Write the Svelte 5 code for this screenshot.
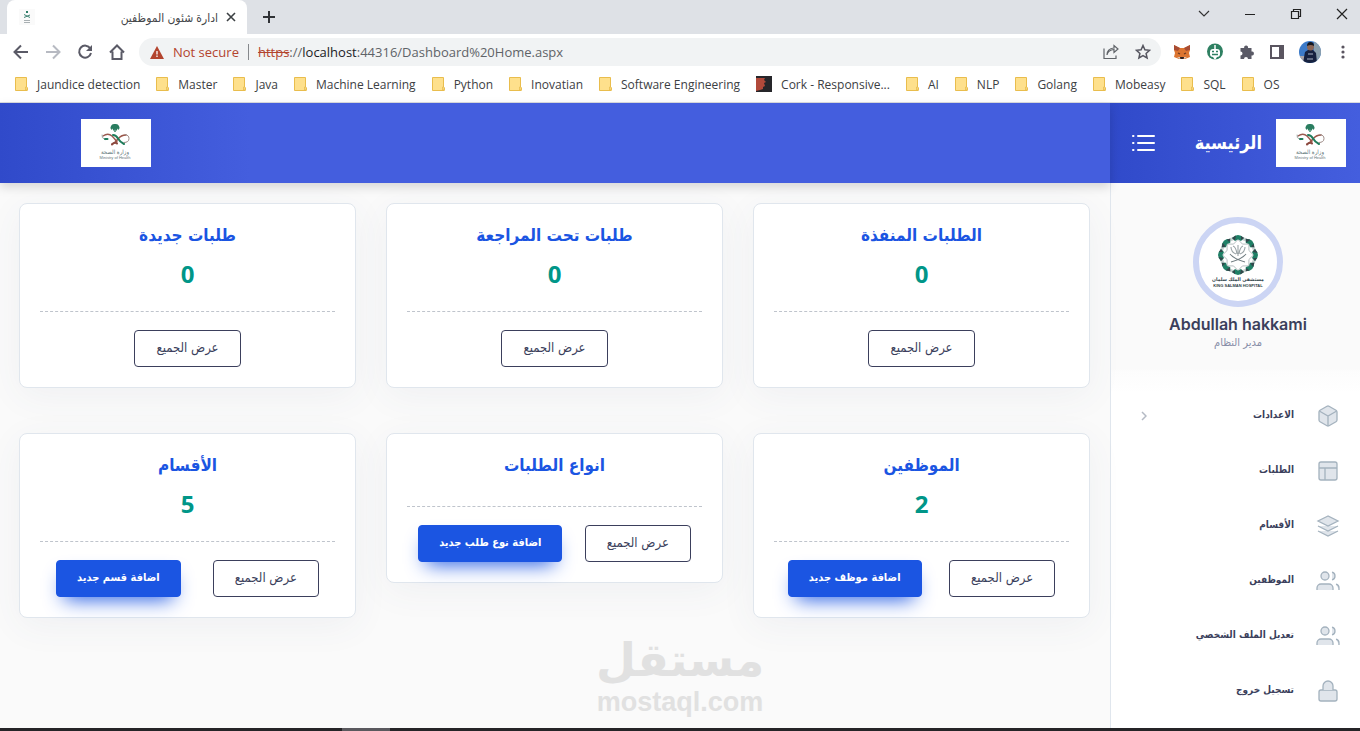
<script>
  const bookmarks = [
    'Jaundice detection', 'Master', 'Java', 'Machine Learning', 'Python', 'Inovatian',
    'Software Engineering', 'Cork - Responsive...', 'AI', 'NLP', 'Golang', 'Mobeasy', 'SQL', 'OS'
  ];

  const cards = [
    { title: 'الطلبات المنفذة', count: 0 },
    { title: 'طلبات تحت المراجعة', count: 0 },
    { title: 'طلبات جديدة', count: 0 },
    { title: 'الموظفين', count: 2, add: 'اضافة موظف جديد' },
    { title: 'انواع الطلبات', add: 'اضافة نوع طلب جديد' },
    { title: 'الأقسام', count: 5, add: 'اضافة قسم جديد' }
  ];

  const menu = [
    { label: 'الاعدادات', icon: 'box', more: true },
    { label: 'الطلبات', icon: 'layout' },
    { label: 'الأقسام', icon: 'layers' },
    { label: 'الموظفين', icon: 'users' },
    { label: 'تعديل الملف الشخصي', icon: 'users' },
    { label: 'تسجيل خروج', icon: 'lock' }
  ];

  const lobes = [0, 45, 90, 135, 180, 225, 270, 315];
</script>

{#snippet ministry()}
  <svg class="ministry" viewBox="0 0 70 48" role="img" aria-label="وزارة الصحة">
    <rect width="70" height="48" fill="#fff" />
    <path d="M34 5q3-.5 4 2 1.500 2-.5 4l-1-1.500-.8 2.500-1-1.500V13h-1.400v-2.500l-1 1.500-.8-2.500-1 1.500q-2-2-.5-4 1-2.500 4-2z" fill="#2a7d60" />
    <g fill="none" stroke-linecap="round">
      <path d="M22 17q5-3.500 9 0 3 3 5 6" stroke="#9b5a50" stroke-width="1.400" />
      <path d="M31 25q3-1 6-5t8-4" stroke="#9a5548" stroke-width="1.600" />
      <path d="M32 16q3 0 5 3.500t6 5.500" stroke="#1f7d5c" stroke-width="2" />
      <path d="M44 15.500q4 .5 4 4 0 4-5 4" stroke="#9c8a86" stroke-width="1" />
      <path d="M21 16q-1 3 3 4.500" stroke="#9aa5a1" stroke-width="1" />
      <path d="M31 25.500q3-3 5-1" stroke="#8c4a40" stroke-width="2" />
      <path d="M24 20h2.500" stroke="#1f7d5c" stroke-width="2" />
    </g>
    <text class="ministry-ar" x="34" y="35" text-anchor="middle">وزارة الصحة</text>
    <text class="ministry-en" x="34" y="40" text-anchor="middle">Ministry of Health</text>
  </svg>
{/snippet}

<div class="page">
  <div class="tabs">
    <div class="tab">
      <svg class="favicon" viewBox="0 0 16 16" aria-hidden="true">
        <rect width="16" height="16" fill="#fafafa" />
        <path d="M8 2v2" stroke="#2c7d68" stroke-width="2" />
        <path d="M5 5.500l6 3M11 6l-6 2.500" stroke="#3f8474" />
        <path d="M5 11.500h6M5 13.500h6" stroke="#a9b0b3" />
      </svg>
      <span class="tab-title" dir="rtl">ادارة شئون الموظفين</span>
      <button class="bare" aria-label="Close tab">
        <svg width="10" height="10" viewBox="0 0 10 10"><path d="M1 1l8 8M9 1L1 9" stroke="#3c4043" stroke-width="1.600" /></svg>
      </button>
    </div>
    <button class="bare new-tab" aria-label="New tab">
      <svg width="14" height="14" viewBox="0 0 14 14"><path d="M7 1v12M1 7h12" stroke="#303236" stroke-width="2" /></svg>
    </button>
    <div class="window-buttons">
      <button class="bare" aria-label="Search tabs"><svg width="12" height="12" viewBox="0 0 12 12"><path d="M1 3l5 5 5-5" fill="none" stroke="#333" stroke-width="1.200" /></svg></button>
      <button class="bare" aria-label="Minimize"><svg width="12" height="12" viewBox="0 0 12 12"><path d="M1 6.500h10" stroke="#222" /></svg></button>
      <button class="bare" aria-label="Restore"><svg width="12" height="12" viewBox="0 0 12 12"><path d="M1.500 3.500h7v7h-7zM3.500 3.500v-2h7v7h-2" fill="none" stroke="#222" stroke-width="1.200" /></svg></button>
      <button class="bare" aria-label="Close"><svg width="12" height="12" viewBox="0 0 12 12"><path d="M1 1l10 10M11 1L1 11" stroke="#222" stroke-width="1.200" /></svg></button>
    </div>
  </div>

  <div class="toolbar">
    <div class="nav-buttons">
      <button class="bare" aria-label="Back"><svg width="16" height="16" viewBox="0 0 16 16"><path d="M15 8H2.500M8 1.500L1.500 8 8 14.500" fill="none" stroke="#5a5a66" stroke-width="2" /></svg></button>
      <button class="bare" aria-label="Forward"><svg width="16" height="16" viewBox="0 0 16 16"><path d="M1 8h12.500M8 1.500L14.500 8 8 14.500" fill="none" stroke="#b7bac2" stroke-width="2" /></svg></button>
      <button class="bare" aria-label="Reload"><svg width="16" height="16" viewBox="0 0 16 16"><path d="M13.300 4.500A6 6 0 1 0 14 9" fill="none" stroke="#5a5a66" stroke-width="2" /><path d="M15 1v6H9z" fill="#5a5a66" /></svg></button>
      <button class="bare" aria-label="Home"><svg width="16" height="16" viewBox="0 0 16 16"><path d="M1 8.500L8 1.500l7 7M3.500 7.500v7.500h9V7.500" fill="none" stroke="#5a5a66" stroke-width="2" /></svg></button>
    </div>
    <div class="address">
      <svg width="14" height="13" viewBox="0 0 14 13" aria-hidden="true"><path d="M7 0l7 13H0z" fill="#b3442e" /><path d="M7 5v3.500M7 9.500v1.500" stroke="#fff" stroke-width="1.300" /></svg>
      <span class="not-secure">Not secure</span>
      <span class="divider"></span>
      <span class="url"><s>https</s>://<b>localhost</b>:44316/Dashboard%20Home.aspx</span>
      <button class="bare" aria-label="Share"><svg width="16" height="16" viewBox="0 0 16 16"><path d="M1 4.500v10h12v-3M4 11q1-5 7-5.500V8.500L15 5 11 1.500V4Q4 4.500 4 11z" fill="none" stroke="#5f6368" stroke-width="1.200" /></svg></button>
      <button class="bare" aria-label="Bookmark"><svg width="16" height="16" viewBox="0 0 16 16"><path d="M8 1.500l1.900 4.300 4.700.5-3.500 3.100 1 4.600L8 11.700 3.900 14l1-4.600L1.400 6.300l4.700-.5z" fill="none" stroke="#55555f" stroke-width="1.500" /></svg></button>
    </div>
    <div class="extensions">
      <button class="bare" aria-label="MetaMask"><svg width="18" height="18" viewBox="0 0 18 18"><path d="M1 2l6 3h4l6-3v5l-1 3 1 4-5 2H6l-5-2 1-4-1-3z" fill="#dc7530" /><path d="M1 2l6 3-2 3-4-1zM17 2l-6 3 2 3 4-1z" fill="#a84c33" /><path d="M5 10l2 1M13 10l-2 1" stroke="#6b3a24" stroke-width="1.300" /><path d="M7 14h4l-.5 2h-3z" fill="#2b2020" /><path d="M4 14l3 0 0 2zM14 14l-3 0 0 2z" fill="#d8c4b4" /></svg></button>
      <button class="bare" aria-label="Robot"><svg width="18" height="18" viewBox="0 0 18 18"><circle cx="9" cy="8.500" r="8" fill="#2f8062" /><path d="M9 2v4" stroke="#fff" stroke-width="1.500" /><rect x="4" y="6" width="10" height="8" rx="3" fill="#fff" /><path d="M6 8.500h2M10 8.500h2M6 11.500h6" stroke="#2f8062" stroke-width="1.500" /><path d="M7 14h4l-2 3z" fill="#fff" /></svg></button>
      <button class="bare" aria-label="Extensions"><svg width="16" height="16" viewBox="0 0 16 16"><path d="M1.500 4h3.700a2 2 0 1 1 3.800 0h3.500v3.600a2 2 0 1 1 0 3.900V15H9a2 2 0 0 0-4 0H1.500v-3.500a2 2 0 0 0 0-4z" fill="#5a5a66" /></svg></button>
      <button class="bare" aria-label="Side panel"><svg width="14" height="14" viewBox="0 0 14 14"><path d="M1 1h12v12H1z" fill="#fff" stroke="#5a5560" stroke-width="2" /><path d="M9 1h4v12H9z" fill="#5a5560" /></svg></button>
      <button class="bare" aria-label="Profile"><svg width="22" height="22" viewBox="0 0 22 22"><defs><clipPath id="face"><circle cx="11" cy="11" r="11" /></clipPath></defs><g clip-path="url(#face)"><path d="M0 0h22v22H0z" fill="#3c7ac8" /><path d="M15 0h7v22h-7z" fill="#8ba0ae" /><path d="M0 15h6v7H0z" fill="#a9a4a8" /><path d="M4 22l2-11 3-2h5l3 3 1 10z" fill="#16213f" /><circle cx="11.500" cy="6" r="3.500" fill="#8b6656" /><path d="M8 5q0-4 3.500-4T15 5q-3-2-7 0z" fill="#161820" /><path d="M9 13h5M8 18h6" stroke="#a9b3c4" /></g></svg></button>
      <button class="bare more" aria-label="Menu"><svg width="4" height="16" viewBox="0 0 4 16"><g fill="#5a5560"><circle cx="2" cy="3" r="1.600" /><circle cx="2" cy="8" r="1.600" /><circle cx="2" cy="13" r="1.600" /></g></svg></button>
    </div>
  </div>

  <nav class="bookmarks" aria-label="Bookmarks">
    {#each bookmarks as name}
      <a href="#bookmark">
        {#if name.startsWith('Cork')}
          <svg width="16" height="16" viewBox="0 0 16 16" aria-hidden="true"><path d="M0 0h16v16H0z" fill="#26262a" /><path d="M0 2h9L8 4l2 2-2 1 1 3-2 1v2l-3 1-4 1z" fill="#b1493a" /></svg>
        {:else}
          <svg width="13" height="14" viewBox="0 0 13 14" aria-hidden="true"><path d="M.5.5h11v9.500q1.500 0 .8 3.500H.5z" fill="#fee08c" stroke="#e9bd4d" /><path d="M10.500 13v-3h1.500v3z" fill="#fee7a5" stroke="#e9bd4d" stroke-width=".8" /></svg>
        {/if}
        {name}
      </a>
    {/each}
  </nav>

  <div class="app" dir="rtl">
    <aside>
      <div class="brand">
        {@render ministry()}
        <h1>الرئيسية</h1>
        <button class="bare" aria-label="القائمة">
          <svg width="24" height="18" viewBox="0 0 24 18"><path d="M7 2h16M7 9h16M7 16h16" stroke="#fff" stroke-width="2" stroke-linecap="round" /><path d="M2 2h.5M2 9h.5M2 16h.5" stroke="#fff" stroke-width="2" stroke-linecap="round" /></svg>
        </button>
      </div>
      <div class="profile">
        <div class="avatar">
          <svg viewBox="0 0 78 78" role="img" aria-label="King Salman Hospital">
            <circle cx="39" cy="32" r="17" fill="#fff" stroke="#c9cfd0" stroke-width="3" />
            {#each lobes as angle}
              <g transform="rotate({angle} 39 32)">
                <path d="M33 15q6-6 12 0l-3 3q-3-2-6 0z" fill="#1f8066" />
                <path d="M33 15l4-2.500-1 5zM45 15l-3-2 0 4z" fill="#34464b" />
              </g>
            {/each}
            <path d="M39 16.500l4.500 4.600h6.400v6.400L54.500 32l-4.600 4.500v6.400h-6.400L39 47.500l-4.500-4.600h-6.400v-6.400L23.500 32l4.600-4.500v-6.400h6.400z" fill="#fff" stroke="#a3adb0" stroke-width=".8" />
            <g fill="none" stroke="#9aa3a6" stroke-width="1.100"><path d="M39 33V22M38 31q-1-7-4-8M40 31q1-7 4-8M37 31q-5-2-5-7M41 31q5-2 5-7" /><path d="M31 31q4 5 15 8M47 31q-4 5-15 8" stroke="#6f7c80" /></g>
            <text class="hospital-ar" x="39" y="58" text-anchor="middle">مستشفى الملك سلمان</text>
            <text class="hospital-en" x="39" y="64" text-anchor="middle">KING SALMAN HOSPITAL</text>
          </svg>
        </div>
        <h2>Abdullah hakkami</h2>
        <p>مدير النظام</p>
      </div>
      <nav class="menu" aria-label="القائمة الرئيسية">
        {#each menu as item}
          <a href="#menu">
            <svg class="icon" viewBox="0 0 24 24" aria-hidden="true">
              {#if item.icon === 'box'}
                <path d="M21 16V8a2 2 0 0 0-1-1.730l-7-4a2 2 0 0 0-2 0l-7 4A2 2 0 0 0 3 8v8a2 2 0 0 0 1 1.730l7 4a2 2 0 0 0 2 0l7-4A2 2 0 0 0 21 16z" />
                <path d="M3.270 6.960L12 12.010l8.730-5.050M12 22.080V12" />
              {:else if item.icon === 'layout'}
                <rect x="3" y="3" width="18" height="18" rx="2" />
                <path d="M3 9h18M9 21V9" />
              {:else if item.icon === 'layers'}
                <path d="M12 2L2 7l10 5 10-5zM2 17l10 5 10-5M2 12l10 5 10-5" />
              {:else if item.icon === 'users'}
                <path d="M17 21v-2a4 4 0 0 0-4-4H5a4 4 0 0 0-4 4v2" />
                <circle cx="9" cy="7" r="4" />
                <path d="M23 21v-2a4 4 0 0 0-3-3.870M16 3.130a4 4 0 0 1 0 7.750" />
              {:else}
                <rect x="3" y="11" width="18" height="11" rx="2" />
                <path d="M7 11V7a5 5 0 0 1 10 0v4" />
              {/if}
            </svg>
            <span>{item.label}</span>
            {#if item.more}
              <svg width="6" height="10" viewBox="0 0 6 10" aria-hidden="true"><path d="M1 1l4 4-4 4" fill="none" stroke="#b4bac4" stroke-width="1.500" /></svg>
            {/if}
          </a>
        {/each}
      </nav>
    </aside>

    <div class="main">
      <header>{@render ministry()}</header>
      <main>
        {#each cards as card}
          <section class="card">
            <div class="head">
              <h3>{card.title}</h3>
              {#if card.count !== undefined}<p>{card.count}</p>{/if}
            </div>
            <div class="actions">
              <button class="outline">عرض الجميع</button>
              {#if card.add}<button class="primary">{card.add}</button>{/if}
            </div>
          </section>
        {/each}
      </main>
    </div>
  </div>

  <div class="watermark">
    <span class="mark-ar" dir="rtl">مستقل</span>
    <span class="mark-en">mostaql.com</span>
  </div>
  <div class="taskbar"><span></span></div>
</div>

<style>
  :global(body) {
    margin: 0;
  }

  * {
    box-sizing: border-box;
  }

  .page {
    position: relative;
    display: flex;
    flex-direction: column;
    min-height: 100vh;
    font-family: "Open Sans", "DejaVu Sans Condensed", "DejaVu Sans", sans-serif;
    background: #fafafa;
  }

  h1, h2, h3, p {
    margin: 0;
  }

  a {
    text-decoration: none;
  }

  svg {
    flex: none;
    display: block;
  }

  .bare {
    display: flex;
    align-items: center;
    justify-content: center;
    padding: 0;
    border: 0;
    background: none;
  }

  .tabs {
    display: flex;
    align-items: center;
    height: 34px;
    padding-left: 7px;
    background: #dee1e6;
  }

  .tab {
    display: flex;
    align-items: center;
    gap: 8px;
    width: 240px;
    height: 34px;
    padding: 0 11px 0 12px;
    border-radius: 8px 8px 0 0;
    background: #fff;
  }

  .favicon {
    width: 16px;
    height: 16px;
  }

  .tab-title {
    flex: 1;
    font-size: 12px;
    color: #45474a;
  }

  .new-tab {
    margin-left: 15px;
  }

  .window-buttons {
    display: flex;
    gap: 34px;
    margin: 0 12px 6px auto;
  }

  .toolbar {
    display: flex;
    align-items: center;
    height: 36px;
    padding: 0 15px 0 13px;
    background: #fff;
  }

  .nav-buttons {
    display: flex;
    gap: 16px;
    margin-right: 14px;
  }

  .address {
    flex: 1;
    display: flex;
    align-items: center;
    height: 28px;
    padding: 0 10px 0 11px;
    border-radius: 14px;
    background: #f1f3f4;
    font-size: 13px;
    color: #5f6368;
  }

  .not-secure {
    margin-left: 9px;
    color: #b3442e;
  }

  .divider {
    width: 1px;
    height: 16px;
    margin: 0 9px;
    background: #85888c;
  }

  .url {
    flex: 1;
  }

  .url s {
    color: #b3442e;
  }

  .url b {
    font-weight: 400;
    color: #202124;
  }

  .address .bare + .bare {
    margin-left: 16px;
  }

  .extensions {
    display: flex;
    align-items: center;
    gap: 15px;
    margin-left: 12px;
  }

  .more {
    margin-left: 5px;
  }

  .bookmarks {
    display: flex;
    align-items: center;
    gap: 16px;
    height: 33px;
    padding: 0 15px 4px;
    border-bottom: 1px solid #dadce0;
    background: #fff;
    font-size: 12px;
    white-space: nowrap;
  }

  .bookmarks a {
    display: flex;
    align-items: center;
    gap: 9px;
    color: #3c4043;
  }

  .app {
    flex: 1;
    display: flex;
    font-family: "DejaVu Sans Condensed", "DejaVu Sans", sans-serif;
  }

  aside {
    width: 250px;
    flex: none;
    display: flex;
    flex-direction: column;
    border-left: 1px solid #e0e6ed;
    background: #fff;
  }

  .brand {
    display: flex;
    align-items: center;
    height: 80px;
    margin-left: -1px;
    padding: 0 14px 0 21px;
    background: linear-gradient(to right, #304aca, #445ede);
  }

  .ministry {
    width: 70px;
    height: 48px;
  }

  .ministry-ar {
    font-size: 6px;
    fill: #5f7779;
  }

  .ministry-en {
    font-family: "Liberation Sans", sans-serif;
    font-size: 4px;
    fill: #66767a;
  }

  h1 {
    flex: 1;
    margin-right: 14px;
    font-size: 18px;
    line-height: 32px;
    color: #fff;
  }

  .profile {
    display: flex;
    flex-direction: column;
    align-items: center;
    height: 210px;
    padding: 34px 0 0 5px;
    background: linear-gradient(#fafafa 186px, #fcfcfc 188px, #fff);
  }

  .avatar {
    width: 90px;
    height: 90px;
    border: 6px solid #ccd5f4;
    border-radius: 50%;
    background: #fff;
  }

  .hospital-ar {
    font-size: 5px;
    font-weight: 700;
    fill: #2f4148;
  }

  .hospital-en {
    font-family: "Liberation Sans", sans-serif;
    font-size: 4px;
    font-weight: 700;
    fill: #2f4148;
  }

  h2 {
    margin-top: 5px;
    font-family: Inter, sans-serif;
    font-size: 16px;
    font-weight: 600;
    line-height: 24px;
    color: #3b3f5c;
  }

  .profile p {
    font-size: 11px;
    line-height: 14px;
    color: #888ea8;
  }

  .menu a {
    display: flex;
    align-items: center;
    height: 55px;
    padding: 0 20px 10px 30px;
    font-size: 10px;
    font-weight: 700;
    color: #3b3f5c;
  }

  .menu span {
    flex: 1;
    margin-right: 22px;
    padding-bottom: 2px;
  }

  .icon {
    width: 24px;
    height: 24px;
    fill: #e0e5eb;
    stroke: #a4b2be;
    stroke-width: 1.3;
  }

  .main {
    flex: 1;
    min-width: 0;
  }

  header {
    display: flex;
    align-items: center;
    justify-content: flex-end;
    height: 80px;
    padding-left: 81px;
    background: linear-gradient(to right, #304aca, #445ede 250px);
    box-shadow: 0 4px 10px rgba(0, 0, 0, 0.15);
  }

  main {
    display: grid;
    grid-template-columns: repeat(3, minmax(0, 1fr));
    align-items: start;
    gap: 45px 30px;
    padding: 20px 20px 20px 19px;
  }

  .card {
    padding: 20px;
    border: 1px solid #e0e6ed;
    border-radius: 8px;
    background: #fff;
    box-shadow: 0 8px 36px rgba(70, 80, 120, 0.06);
  }

  .head {
    padding-bottom: 24px;
    border-bottom: 1px dashed #bfc4cc;
    text-align: center;
  }

  h3 {
    margin-bottom: 6px;
    font-size: 17px;
    line-height: 22px;
    color: #1b55e2;
  }

  .head p {
    padding: 9px 0 1px;
    font-family: "Open Sans", sans-serif;
    font-size: 24px;
    font-weight: 700;
    line-height: 25px;
    color: #009688;
  }

  .actions {
    display: flex;
    justify-content: space-around;
    padding-top: 18px;
  }

  .outline, .primary {
    height: 37px;
    padding: 0 20px 3px;
    border: 1px solid #3b3f5c;
    border-radius: 4px;
    background: #fff;
    font-family: "DejaVu Sans Condensed", "DejaVu Sans", sans-serif;
    font-size: 13px;
    color: #3b3f5c;
    white-space: nowrap;
  }

  .outline {
    padding: 0 21px 3px;
  }

  .primary {
    border-color: #1b55e2;
    background: #1b55e2;
    color: #fff;
    font-size: 11px;
    font-weight: 700;
    box-shadow: 0 10px 20px -8px #1b55e2;
  }

  .watermark {
    position: absolute;
    left: 50%;
    bottom: 13px;
    display: flex;
    flex-direction: column;
    align-items: center;
    transform: translateX(-50%);
    color: #e1e1e1;
    font-weight: 700;
  }

  .mark-ar {
    font-family: "DejaVu Sans", sans-serif;
    font-size: 46px;
    line-height: 54px;
  }

  .mark-en {
    font-family: "Liberation Sans", sans-serif;
    font-size: 27px;
    line-height: 31px;
  }

  .taskbar {
    height: 3px;
    padding-left: 342px;
    background: #252427;
  }

  .taskbar span {
    display: block;
    width: 48px;
    height: 3px;
    background: #5a595e;
  }
</style>
